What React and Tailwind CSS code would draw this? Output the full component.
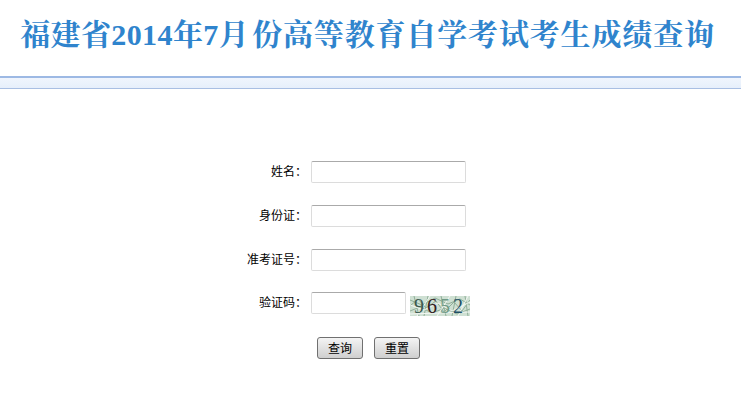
function Row({ label, short, children }) {
  return (
    <div className="flex items-center h-[22px]">
      <label className="w-[307px] pb-[2px] text-right text-[12px] text-black">{label}：</label>
      <input
        type="text"
        className={`${short ? "w-[95px]" : "w-[155px]"} ml-[4px] h-[22px] bg-white rounded-[2px] border border-[#dcdcdc] border-t-[#aaaaaa]`}
      />
      {children}
    </div>
  )
}

function Captcha() {
  return (
    <div className="relative ml-[4px] mt-[5px] w-[60px] h-[20px] bg-[#cfe0d3] overflow-hidden">
      <svg className="absolute inset-0" width="60" height="20" viewBox="0 0 60 20">
        <path d="M0 4L12 9L25 2L38 8L50 3L60 9M0 15L10 11L22 17L35 12L47 18L60 13M4 0L9 20M18 0L14 20M31 0L36 20M46 0L42 20M55 0L58 20M0 10L8 3L16 12L26 5L34 16L44 6L52 15L60 4" stroke="#8fae98" strokeWidth="1" fill="none" />
        <path d="M0 9L14 14L28 7L42 15L60 6M7 20L20 0M27 20L40 0M48 20L58 0M0 18L60 16" stroke="#f3f7f3" strokeWidth="1" fill="none" />
      </svg>
      <div className="relative flex gap-[3px] pl-[4px] h-full items-center text-[20px] leading-none font-['Liberation_Serif',serif]">
        <span className="text-[#3d5a50]">9</span>
        <span className="text-[#33201f]">6</span>
        <span className="text-[#6f9a86]">5</span>
        <span className="text-[#1f4f66]">2</span>
      </div>
    </div>
  )
}

function App() {
  return (
    <div className="w-[741px] h-[401px] bg-white overflow-hidden font-['Noto_Sans_CJK_SC','Liberation_Sans',sans-serif]">
      <h1 className="h-[76px] pt-[15px] pr-[6px] text-center text-[30px] leading-[40px] font-bold text-[#2f84cd] font-['Liberation_Serif','Noto_Serif_CJK_SC','Noto_Sans_CJK_SC',serif] whitespace-nowrap">
        <span className="tracking-[0.4px]">福建省2014年7月</span><span className="inline-block w-[3px]"></span><span className="tracking-[0.85px]">份高等教育自学考试考生成绩查询</span>
      </h1>
      <div className="h-[13px] border-t-2 border-b border-t-[#9db9e4] border-b-[#a9bfe3] bg-gradient-to-b from-[#f0f5fd] to-[#e6effb]"></div>

      <form className="pt-[72px] flex flex-col">
        <div className="flex flex-col gap-[22px]">
          <Row label="姓名" />
          <Row label="身份证" />
          <Row label="准考证号" />
        </div>
        <div className="mt-[21px]">
          <Row label="验证码" short>
            <Captcha />
          </Row>
        </div>
        <div className="flex gap-[11px] mt-[23px] ml-[317px]">
          <button type="button" className="w-[46px] h-[22px] text-[12px] text-black rounded-[3px] border border-[#707070] bg-gradient-to-b from-[#f4f4f4] to-[#cfcfcf]">查询</button>
          <button type="button" className="w-[46px] h-[22px] text-[12px] text-black rounded-[3px] border border-[#707070] bg-gradient-to-b from-[#f4f4f4] to-[#cfcfcf]">重置</button>
        </div>
      </form>
    </div>
  )
}

export default App
